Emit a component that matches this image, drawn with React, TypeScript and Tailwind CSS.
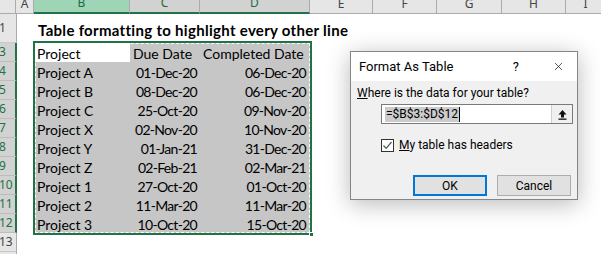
import { X } from 'lucide-react';

type Col = { key: string; w: string };

const cols: Col[] = [
  { key: 'A', w: 'w-[18px]' },
  { key: 'B', w: 'w-[96px]' },
  { key: 'C', w: 'w-[70px]' },
  { key: 'D', w: 'w-[110px]' },
  { key: 'E', w: 'w-[63px]' },
  { key: 'F', w: 'w-[64px]' },
  { key: 'G', w: 'w-[65px]' },
  { key: 'H', w: 'w-[64px]' },
  { key: 'I', w: 'w-[40px]' },
];

const projects = [
  ['Project A', '01-Dec-20', '06-Dec-20'],
  ['Project B', '08-Dec-20', '06-Dec-20'],
  ['Project C', '25-Oct-20', '09-Nov-20'],
  ['Project X', '02-Nov-20', '10-Nov-20'],
  ['Project Y', '01-Jan-21', '31-Dec-20'],
  ['Project Z', '02-Feb-21', '02-Mar-21'],
  ['Project 1', '27-Oct-20', '01-Oct-20'],
  ['Project 2', '11-Mar-20', '11-Mar-20'],
  ['Project 3', '10-Oct-20', '15-Oct-20'],
];

const headerFont = { fontFamily: '"Noto Sans", sans-serif' };

function ColumnHeaders() {
  return (
    <div className="flex h-[14px] shrink-0" style={headerFont}>
      <div className="w-[16px] shrink-0 bg-[#e6e6e6] border-r border-[#ababab] border-b border-b-[#ababab]" />
      {cols.map((c) => {
        const picked = c.key === 'B' || c.key === 'C' || c.key === 'D';
        const bg = c.key === 'B' ? 'bg-[#9fd5b7]' : picked ? 'bg-[#d2d2d2]' : 'bg-[#e6e6e6]';
        return (
          <div
            key={c.key}
            className={`${c.w} shrink-0 overflow-hidden flex items-end justify-center pb-[3px] leading-none text-[12px] border-r border-[#ababab] ${bg} ${
              picked ? 'border-b-2 border-b-[#217346] text-[#1d6b40]' : 'border-b border-b-[#ababab] text-[#444]'
            }`}
          >
            {c.key}
          </div>
        );
      })}
    </div>
  );
}

function RowHeader({ n, picked, h }: { n: string; picked?: boolean; h: string }) {
  return (
    <div
      className={`w-[17px] shrink-0 ${h} flex items-center text-[12px] leading-none ${
        picked
          ? 'bg-[#d2d2d2] text-[#217346] border-r-2 border-[#217346] border-b border-b-[#bdbdbd]'
          : 'bg-[#e6e6e6] text-[#444] border-r border-[#ababab] border-b border-b-[#c8c8c8]'
      }`}
      style={headerFont}
    >
      <span className="-ml-[1px]">{n}</span>
    </div>
  );
}

function DataRow({ cells, n, first }: { cells: string[]; n: string; first?: boolean }) {
  return (
    <div className="flex h-[19px] shrink-0 whitespace-nowrap">
      <RowHeader n={n} picked h="h-[19px]" />
      <div className="w-[17px] shrink-0" />
      <div className={`w-[96px] shrink-0 flex items-center pt-[2px] pl-[3px] ${first ? 'bg-white' : 'bg-[#c6c6c6]'}`}>
        {cells[0]}
      </div>
      <div
        className={`w-[70px] shrink-0 flex items-center pt-[2px] bg-[#c6c6c6] ${
          first ? 'pl-[3px]' : 'justify-end pr-[3px] tracking-[-0.7px]'
        }`}
      >
        {cells[1]}
      </div>
      <div
        className={`w-[110px] shrink-0 flex items-center pt-[2px] bg-[#c6c6c6] ${
          first ? 'pl-[3px]' : 'justify-end pr-[4px] tracking-[-0.7px]'
        }`}
      >
        {cells[2]}
      </div>
    </div>
  );
}

function Dialog() {
  return (
    <div
      className="absolute left-[350px] top-[51px] w-[228px] h-[149px] bg-[#f0f0f0] border border-[#858585] shadow-[0_4px_22px_rgba(0,0,0,0.28)] text-[12px] text-black"
      style={{ fontFamily: 'Roboto, "Noto Sans", sans-serif' }}
    >
      <div className="h-[29px] bg-white flex items-center pl-[8px] pr-[12px] text-[13px]">
        <span className="flex-1">Format As Table</span>
        <span className="mr-[33px] text-[13px]">?</span>
        <X className="w-[13px] h-[13px]" strokeWidth={1.2} />
      </div>

      <div className="pl-[6px] pt-[6px] leading-none">
        <span className="underline">W</span>here is the data for your table?
      </div>

      <div className="ml-[30px] mt-[5px] w-[192px] h-[20px] bg-white border border-[#7a7a7a] flex items-stretch">
        <div className="flex-1 flex items-center pl-[3px]">
          <span className="bg-[#cccccc] px-[1px] leading-[15px]">=$B$3:$D$12</span>
          <span className="w-[1px] h-[15px] bg-black" />
        </div>
        <div className="w-[21px] bg-[#f0f0f0] border-l border-[#cfcfcf] flex items-center justify-center">
          <svg width="9" height="11" viewBox="0 0 9 11">
            <path d="M4.5 1 L8.5 5.5 L6 5.5 L6 8.5 L3 8.5 L3 5.5 L0.5 5.5 Z" fill="#111" />
            <rect x="0.5" y="9.5" width="8" height="1.3" fill="#111" />
          </svg>
        </div>
      </div>

      <div className="ml-[30px] mt-[12px] flex items-center gap-[5px]">
        <div className="w-[13px] h-[13px] bg-white border border-[#333] flex items-center justify-center">
          <svg width="11" height="11" viewBox="0 0 11 11">
            <path d="M1.5 5.5 L4.2 8.3 L9.5 2" stroke="#555" strokeWidth="1.2" fill="none" />
          </svg>
        </div>
        <span>
          <span className="underline">M</span>y table has headers
        </span>
      </div>

      <div className="flex justify-end gap-[10px] pr-[6px] mt-[21px]">
        <button className="w-[74px] h-[21px] bg-[#e1e1e1] border-2 border-[#0078d7] flex items-center justify-center">
          OK
        </button>
        <button className="w-[74px] h-[21px] bg-[#e1e1e1] border border-[#adadad] flex items-center justify-center">
          Cancel
        </button>
      </div>
    </div>
  );
}

export default function App() {
  return (
    <div
      className="relative w-[601px] h-[254px] overflow-hidden bg-white text-[14px] text-black"
      style={{ fontFamily: 'Lato, "Liberation Sans", sans-serif' }}
    >
      <ColumnHeaders />

      {/* Row 1: title */}
      <div className="flex h-[29px]">
        <RowHeader n="1" h="h-[29px]" />
        <div className="w-[21px] shrink-0" />
        <div className="flex items-center pt-[3px] whitespace-nowrap font-bold text-[15px] tracking-[0.3px]">
          Table formatting to highlight every other line
        </div>
      </div>

      {/* Rows 3-12 */}
      <DataRow cells={['Project', 'Due Date', 'Completed Date']} n="3" first />
      {projects.map((p, i) => (
        <DataRow key={p[0]} cells={p} n={String(i + 4)} />
      ))}

      {/* Row 13 */}
      <div className="flex h-[19px]">
        <RowHeader n="13" h="h-[19px]" />
      </div>
      <div className="flex h-[10px]">
        <RowHeader n="" h="h-[10px]" />
      </div>

      {/* Selection marquee over B3:D12 */}
      <div className="absolute left-[33px] top-[41px] w-[279px] h-[194px] border-2 border-[#217346] pointer-events-none">
        <div className="absolute inset-0 border border-dashed border-white" />
        <div className="absolute -right-[4px] -bottom-[4px] w-[5px] h-[5px] bg-[#217346] border border-white" />
      </div>

      <Dialog />
    </div>
  );
}
